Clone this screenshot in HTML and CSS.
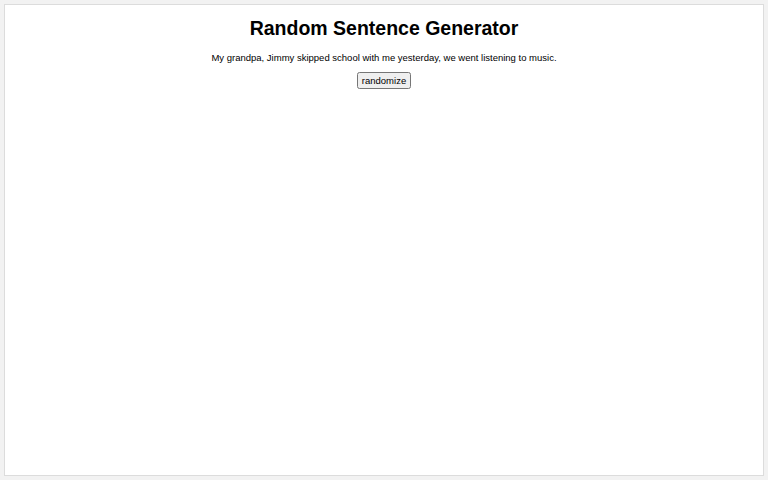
FILE: index.html
```html
<!DOCTYPE html>
<html lang="en">
<head>
    <title>Random Sentence Generator</title>
    <link rel="stylesheet" href="styles.css">
</head>
<body>
    <div class="page">
        <h1>Random Sentence Generator</h1>
        <p id="sentence">My grandpa, Jimmy skipped school with me yesterday, we went listening to music.</p>
        <button id="randomize">randomize</button>
    </div>
</body>
</html>
```

FILE: styles.css
```css
body{
    margin: 0;
    padding: 4px;
    height: 480px;
    box-sizing: border-box;
    background-color: #f2f2f2;
    font-family: "Liberation Sans", Arial, sans-serif;
}
.page{
    background-color: white;
    border: 1px solid #dcdcdc;
    height: 100%;
    box-sizing: border-box;
    text-align: center;
    padding-top: 12px;
}
h1{
    font-size: 19.5px;
    margin: 0;
    color: black;
}
p{
    font-size: 9.5px;
    margin: 12px 0 7px 0;
}
#randomize{
    font-family: "Liberation Sans", Arial, sans-serif;
    font-size: 9.5px;
    padding: 1px 3px;
}
```
